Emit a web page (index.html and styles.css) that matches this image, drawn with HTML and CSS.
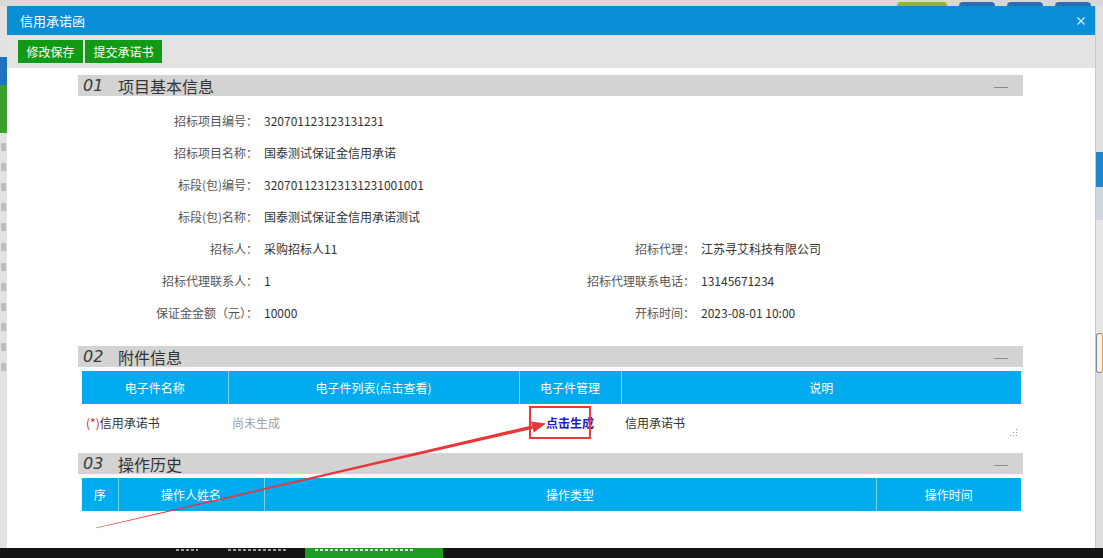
FILE: index.html
```html
<!DOCTYPE html>
<html lang="zh-CN">
<head>
<meta charset="utf-8">
<title>信用承诺函</title>
<link rel="stylesheet" href="styles.css">
</head>
<body>
<div class="topstrip">
  <span class="tab tab-olive"></span>
  <span class="tab tab-blue"></span>
  <span class="tab tab-blue"></span>
  <span class="tab tab-blue"></span>
</div>
<div class="leftstrip">
  <span class="ls-blue"></span>
  <span class="ls-green"></span>
  <span class="ls-icon"></span><span class="ls-icon"></span><span class="ls-icon"></span><span class="ls-icon"></span>
  <span class="ls-icon"></span><span class="ls-icon"></span><span class="ls-icon"></span><span class="ls-icon"></span>
  <span class="ls-icon"></span><span class="ls-icon"></span><span class="ls-icon"></span><span class="ls-icon"></span>
</div>
<div class="dialog">
  <div class="titlebar">
    <span class="title">信用承诺函</span>
    <svg class="close" width="8" height="8" viewBox="0 0 8 8"><path d="M0.5 0.5L7.5 7.5M7.5 0.5L0.5 7.5" stroke="#d6ecfa" stroke-width="1.3" fill="none"/></svg>
  </div>
  <div class="toolbar">
    <button class="btn btn-save">修改保存</button>
    <button class="btn btn-submit">提交承诺书</button>
  </div>
  <div class="content">
    <div class="sec-head">
      <span class="sec-num">01</span><span class="sec-title">项目基本信息</span><span class="sec-min"></span>
    </div>
    <div class="fields">
      <div class="lbl">招标项目编号：</div><div class="val wide">320701123123131231</div>
      <div class="lbl">招标项目名称：</div><div class="val wide">国泰测试保证金信用承诺</div>
      <div class="lbl">标段(包)编号：</div><div class="val wide">320701123123131231001001</div>
      <div class="lbl">标段(包)名称：</div><div class="val wide">国泰测试保证金信用承诺测试</div>
      <div class="lbl">招标人：</div><div class="val">采购招标人11</div>
      <div class="lbl">招标代理：</div><div class="val">江苏寻艾科技有限公司</div>
      <div class="lbl">招标代理联系人：</div><div class="val">1</div>
      <div class="lbl">招标代理联系电话：</div><div class="val">13145671234</div>
      <div class="lbl">保证金金额（元）：</div><div class="val">10000</div>
      <div class="lbl">开标时间：</div><div class="val">2023-08-01 10:00</div>
    </div>

    <div class="sec-head">
      <span class="sec-num">02</span><span class="sec-title">附件信息</span><span class="sec-min"></span>
    </div>
    <table class="grid att">
      <colgroup><col class="c1"><col class="c2"><col class="c3"><col class="c4"></colgroup>
      <thead><tr><th>电子件名称</th><th>电子件列表(点击查看)</th><th>电子件管理</th><th>说明</th></tr></thead>
      <tbody><tr>
        <td class="name"><span class="req">(*)</span>信用承诺书</td>
        <td class="muted">尚未生成</td>
        <td class="center"><a class="gen">点击生成</a></td>
        <td class="desc">信用承诺书<span class="grip"><svg width="8" height="8" viewBox="0 0 8 8"><g fill="#999"><rect x="6" y="0" width="1" height="1"/><rect x="6" y="3" width="1" height="1"/><rect x="3" y="3" width="1" height="1"/><rect x="6" y="6" width="1" height="1"/><rect x="3" y="6" width="1" height="1"/><rect x="0" y="6" width="1" height="1"/></g></svg></span></td>
      </tr></tbody>
    </table>

    <div class="sec-head sec3">
      <span class="sec-num">03</span><span class="sec-title">操作历史</span><span class="sec-min"></span>
    </div>
    <table class="grid hist">
      <colgroup><col class="h1"><col class="h2"><col class="h3"><col class="h4"></colgroup>
      <thead><tr><th>序</th><th>操作人姓名</th><th>操作类型</th><th>操作时间</th></tr></thead>
    </table>
  </div>
</div>
<div class="rightstrip">
  <span class="rs-gap"></span>
  <span class="rs-blue"></span>
  <span class="rs-light"></span>
  <span class="rs-mid"></span>
  <span class="rs-thumb"></span>
  <span class="rs-rest"></span>
</div>
<div class="bottomstrip">
  <span class="bs-dash bs-d1"></span>
  <span class="bs-dash bs-d2"></span>
  <span class="bs-green"><span class="bs-dash bs-d3"></span></span>
</div>

<div class="hl-box"></div>
<svg class="arrow" width="1103" height="558" viewBox="0 0 1103 558">
  <polygon fill="#e8363b" points="95.9,527.7 96.1,528.3 532.9,428.8 532.0,425.4"/>
  <polygon fill="#e8363b" points="546,423.5 531.0,421.6 533.8,432.4"/>
</svg>
</body>
</html>
```
FILE: styles.css
```css
* { box-sizing: border-box; }
html, body { margin: 0; padding: 0; }
body {
  position: relative;
  width: 1103px;
  height: 558px;
  overflow: hidden;
  display: grid;
  grid-template-columns: 7px 1089px 7px;
  grid-template-rows: 6px 542px 10px;
  background: #dcdcdc;
  font-family: "Noto Sans CJK SC", "Noto Sans", sans-serif;
  font-size: 12px;
  color: #333;
}

/* background page */
.topstrip {
  grid-column: 1 / 4;
  grid-row: 1;
  background: #d8d8d8;
  display: flex;
  justify-content: flex-end;
  padding-right: 12px;
  gap: 12px;
  overflow: hidden;
}
.tab { display: block; margin-top: 2px; height: 8px; border-radius: 4px 4px 0 0; }
.tab-olive { width: 50px; background: #8fb23a; }
.tab-blue { width: 36px; background: #2a6fb5; }

.leftstrip {
  grid-column: 1;
  grid-row: 2;
  background: #e2e2e2;
  display: flex;
  flex-direction: column;
  align-items: flex-start;
  padding-top: 51px;
}
.ls-blue { width: 7px; height: 28px; background: #1e74c0; flex: none; }
.ls-green { width: 7px; height: 48px; background: #3c9e2b; flex: none; margin-bottom: 10px; }
.ls-icon { width: 5px; height: 8px; background: #b8bec6; border-radius: 1px; margin: 0 0 12px 1px; flex: none; }

.rightstrip {
  grid-column: 3;
  grid-row: 2;
  background: #e0e0e0;
  display: flex;
  flex-direction: column;
}
.rs-gap { height: 146px; flex: none; }
.rs-blue { height: 35px; background: #1d88cf; flex: none; }
.rs-light { height: 33px; background: #cfd6de; flex: none; }
.rs-mid { height: 113px; background: #e6e6e6; flex: none; }
.rs-thumb { height: 40px; flex: none; background: #f2f2f2; border: 1px solid #888; border-radius: 3px; border-right-color: #e9a24c; }
.rs-rest { flex: 1; background: #dedede; border-top: 1px solid #e0e0e0; }

.bottomstrip {
  grid-column: 1 / 4;
  grid-row: 3;
  background: #141414;
  display: flex;
  align-items: flex-start;
  overflow: hidden;
}
.bs-dash { display: block; height: 2px; margin-top: 1px; background: repeating-linear-gradient(90deg, #9a9a9a 0 3px, transparent 3px 5px); }
.bs-d1 { width: 22px; margin-left: 176px; }
.bs-d2 { width: 58px; margin-left: 30px; }
.bs-green { display: flex; width: 138px; height: 10px; background: #1f9a22; margin-left: 19px; }
.bs-d3 { width: 100px; margin-left: 10px; background: repeating-linear-gradient(90deg, #cfe8cf 0 3px, transparent 3px 5px); }

/* dialog */
.dialog {
  grid-column: 2;
  grid-row: 2;
  display: flex;
  flex-direction: column;
  background: #fff;
  border-right: 1px solid #c8c8c8;
  overflow: hidden;
}
.titlebar {
  height: 29px;
  flex: none;
  background: #0b8ed8;
  display: flex;
  align-items: center;
  justify-content: space-between;
  padding: 0 10px 0 13px;
}
.title { color: #fff; font-size: 13px; }
.close { display: block; }

.toolbar {
  height: 33px;
  flex: none;
  background: #e3e3e3;
  display: flex;
  gap: 2px;
  padding: 5px 11px 0;
  align-items: flex-start;
}
.btn {
  height: 23px;
  border: 0;
  margin: 0;
  padding: 0;
  background: #129a16;
  color: #fff;
  font-family: inherit;
  font-size: 12px;
}
.btn-save { width: 65px; }
.btn-submit { width: 77px; }

.content {
  flex: 1;
  padding: 7px 72px 0 71px;
}

.sec-head {
  height: 21px;
  background: #d3d3d3;
  display: flex;
  align-items: center;
  color: #333;
}
.sec-num {
  font-family: "DejaVu Sans", sans-serif;
  font-style: italic;
  font-size: 16px;
  width: 40px;
  padding-left: 5px;
  color: #3a3a3a;
}
.sec-title { font-size: 16px; flex: 1; color: #333; }
.sec-min { width: 14px; height: 1px; background: #8a8a8a; margin: 3px 15px 0 0; }

.fields {
  display: grid;
  grid-template-columns: 180px 245px 180px 323px;
  column-gap: 6px;
  grid-auto-rows: 32px;
  padding: 8px 0 18px;
  align-items: center;
}
.lbl { text-align: right; color: #555; white-space: nowrap; }
.val { color: #333; white-space: nowrap; }
.val.wide { grid-column: 2 / 5; }

.grid {
  border-collapse: collapse;
  table-layout: fixed;
  width: 939px;
  margin: 4px 0 0 4px;
}
.grid th {
  height: 33px;
  padding: 0;
  background: #00acef;
  color: #fff;
  font-weight: normal;
  font-size: 12px;
  border-right: 1px solid #7fd0f2;
}
.grid th:last-child { border-right: 0; }
.att .c1 { width: 146px; }
.att .c2 { width: 291px; }
.att .c3 { width: 102px; }
.att .c4 { width: 400px; }
.att td { height: 36px; padding: 0 4px; color: #333; }
.att td.muted { color: #a0a0a0; }
.req { color: #e02020; }
.center { text-align: center; }
.gen { color: #1c1ccf; font-weight: bold; cursor: pointer; }
.desc { position: relative; }
.grip { position: absolute; right: 3px; bottom: 3px; line-height: 0; }

.sec3 { margin-top: 13px; }
.hist .h1 { width: 36px; }
.hist .h2 { width: 146px; }
.hist .h3 { width: 612px; }
.hist .h4 { width: 145px; }

/* annotation overlays */
.hl-box {
  position: absolute;
  left: 529px;
  top: 406px;
  width: 62px;
  height: 33px;
  border: 2px solid #e53a3a;
}
.arrow { position: absolute; left: 0; top: 0; pointer-events: none; }
```
